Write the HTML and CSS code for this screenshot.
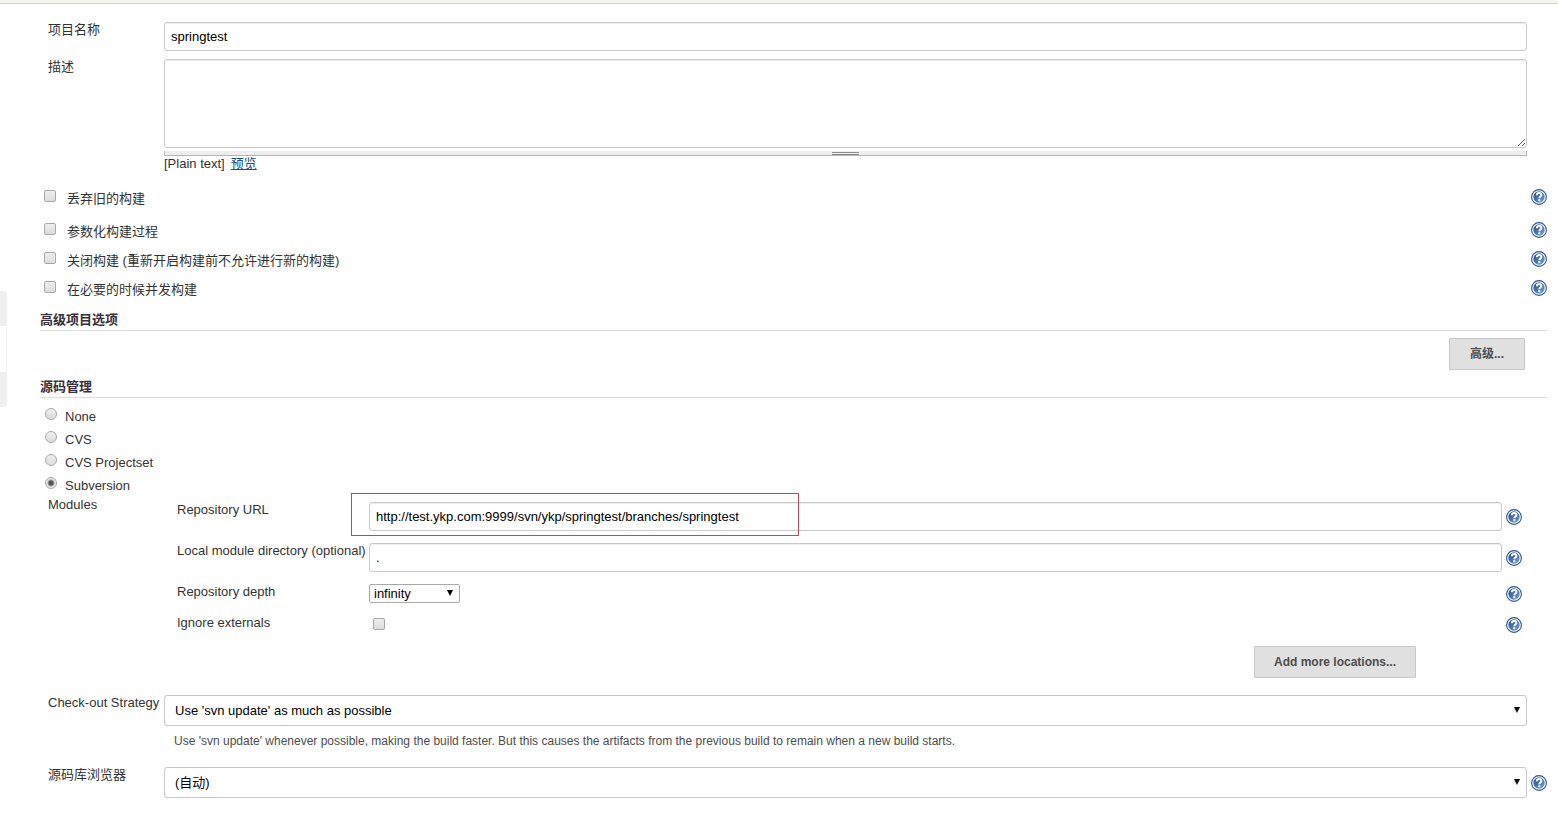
FILE: index.html
```html
<!DOCTYPE html>
<html lang="zh-CN">
<head>
<meta charset="utf-8">
<title>springtest Config</title>
<link rel="stylesheet" href="styles.css">
</head>
<body>
<svg class="defs" aria-hidden="true">
  <defs>
    <linearGradient id="ball" x1="0" y1="0" x2="1" y2="1">
      <stop offset="0" stop-color="#1f4a87"/>
      <stop offset="1" stop-color="#7aa3d4"/>
    </linearGradient>
    <symbol id="help" viewBox="0 0 16 16">
      <circle cx="8" cy="8" r="7.4" fill="#fff" stroke="#2c5591" stroke-width="1.1"/>
      <circle cx="8" cy="8" r="5.7" fill="url(#ball)"/>
      <path d="M5.800 6.200C5.900 4.700 6.800 4 8.100 4c1.400 0 2.300.8 2.300 2 0 1.500-2.100 1.600-2.100 3.200" fill="none" stroke="#fff" stroke-width="1.900"/>
      <rect x="7.300" y="10.200" width="2" height="2" fill="#fff"/>
    </symbol>
  </defs>
</svg>
<div class="topbar"></div>
<div class="page">
  <aside class="drawer"><div class="drawer-body"></div></aside>
  <form class="config">
    <div class="row">
      <label class="name" for="project">项目名称</label>
      <input class="text" id="project" type="text" value="springtest">
    </div>
    <div class="row">
      <label class="name" for="desc">描述</label>
      <div class="stack">
        <textarea class="text area" id="desc"></textarea>
        <div class="handle"><span class="grip"></span></div>
        <div class="preview"><span>[Plain text]</span><a href="#preview">预览</a></div>
      </div>
    </div>

    <div class="checks">
      <div class="option first"><input class="check" type="checkbox" id="c1"><label for="c1">丢弃旧的构建</label><button class="help" type="button" aria-label="Help"><svg><use href="#help"/></svg></button></div>
      <div class="option"><input class="check" type="checkbox" id="c2"><label for="c2">参数化构建过程</label><button class="help" type="button" aria-label="Help"><svg><use href="#help"/></svg></button></div>
      <div class="option"><input class="check" type="checkbox" id="c3"><label for="c3">关闭构建 (重新开启构建前不允许进行新的构建)</label><button class="help" type="button" aria-label="Help"><svg><use href="#help"/></svg></button></div>
      <div class="option"><input class="check" type="checkbox" id="c4"><label for="c4">在必要的时候并发构建</label><button class="help" type="button" aria-label="Help"><svg><use href="#help"/></svg></button></div>
    </div>

    <h2 class="section">高级项目选项</h2>
    <div class="actions"><button class="btn" type="button">高级...</button></div>

    <h2 class="section">源码管理</h2>
    <div class="radios">
      <div class="scm"><input class="radio" type="radio" name="scm" id="r1"><label for="r1">None</label></div>
      <div class="scm"><input class="radio" type="radio" name="scm" id="r2"><label for="r2">CVS</label></div>
      <div class="scm"><input class="radio" type="radio" name="scm" id="r3"><label for="r3">CVS Projectset</label></div>
      <div class="scm"><input class="radio" type="radio" name="scm" id="r4" checked><label for="r4">Subversion</label></div>
    </div>

    <div class="modules">
      <div class="name">Modules</div>
      <div class="fields">
        <div class="field">
          <label for="url">Repository URL</label>
          <div class="marked"><input class="text" id="url" type="text" value="http://test.ykp.com:9999/svn/ykp/springtest/branches/springtest"><span class="mark"></span></div>
          <button class="help" type="button" aria-label="Help"><svg><use href="#help"/></svg></button>
        </div>
        <div class="field">
          <label for="local">Local module directory (optional)</label>
          <input class="text" id="local" type="text" value=".">
          <button class="help" type="button" aria-label="Help"><svg><use href="#help"/></svg></button>
        </div>
        <div class="field">
          <label for="depth">Repository depth</label>
          <div class="select small"><select id="depth"><option>infinity</option></select></div>
          <button class="help" type="button" aria-label="Help"><svg><use href="#help"/></svg></button>
        </div>
        <div class="field">
          <label for="ext">Ignore externals</label>
          <input class="check inner" type="checkbox" id="ext">
          <button class="help" type="button" aria-label="Help"><svg><use href="#help"/></svg></button>
        </div>
        <div class="more"><button class="btn" type="button">Add more locations...</button></div>
      </div>
    </div>

    <div class="row strategy">
      <label class="name" for="strategy">Check-out Strategy</label>
      <div class="stack">
        <div class="select"><select id="strategy"><option>Use 'svn update' as much as possible</option></select></div>
        <p class="hint">Use 'svn update' whenever possible, making the build faster. But this causes the artifacts from the previous build to remain when a new build starts.</p>
      </div>
    </div>
    <div class="row">
      <label class="name" for="browser">源码库浏览器</label>
      <div class="select"><select id="browser"><option>(自动)</option></select></div>
      <button class="help" type="button" aria-label="Help"><svg><use href="#help"/></svg></button>
    </div>
  </form>
</div>
</body>
</html>
```
FILE: styles.css
```css
* {
  box-sizing: border-box;
}

body {
  margin: 0;
  background: #fff;
  color: #333;
  font: 13px/15px "Liberation Sans", "Noto Sans CJK SC", sans-serif;
}

input, select, textarea, button {
  margin: 0;
  font: inherit;
}

.defs {
  position: absolute;
  width: 0;
  height: 0;
}

.topbar {
  height: 4px;
  background: #f6f6ef;
  border-bottom: 1px solid #d3d3c8;
}

.page {
  display: flex;
}

/* Edge of the collapsed side drawer */
.drawer {
  flex: none;
  width: 7px;
  height: 116px;
  margin-top: 287px;
  padding: 35px 0;
  background: #efefef;
  border-radius: 0 4px 4px 0;
}

.drawer-body {
  height: 46px;
  background: #fff;
  border-right: 1px solid #efefef;
}

.config {
  flex: 1;
  min-width: 0;
  padding: 18px 11px 19px 33px;
}

.row {
  display: grid;
  grid-template-columns: 124px 1fr 20px;
  margin-bottom: 8px;
}

.name {
  padding-left: 8px;
  white-space: nowrap;
}

.text {
  display: block;
  width: 100%;
  height: 29px;
  padding: 0 6px;
  background: #fff;
  border: 1px solid #c9c9c9;
  border-radius: 3px;
  box-shadow: inset 0 1px 1px #eee;
  color: #000;
}

.area {
  height: 89px;
  resize: vertical;
}

.handle {
  display: flex;
  justify-content: center;
  height: 5px;
  margin-top: 3px;
  background: #eee;
  border: 1px solid #b5b5b5;
  border-top: 0;
}

.grip {
  width: 27px;
  height: 3px;
  margin-top: 1px;
  border: 1px solid #888;
  border-width: 1px 0;
}

.preview {
  display: flex;
  gap: 6px;
}

a {
  color: #204a87;
}

.checks {
  margin: 11px 0 1px;
}

.option {
  display: flex;
  align-items: center;
  height: 29px;
  padding-left: 4px;
}

.option.first {
  margin-bottom: 4px;
}

.option label {
  flex: 1;
  padding: 4px 0 0 11px;
}

.check, .radio {
  appearance: none;
  flex: none;
  width: 12px;
  height: 12px;
  border: 1px solid #a9a9a9;
  border-radius: 2px;
  background: linear-gradient(#eee, #dcdcdc);
}

.option .check {
  margin-bottom: 1px;
}

.radio {
  border-radius: 50%;
  margin-bottom: 3px;
}

.radio:checked {
  background: radial-gradient(circle, #555 0 2px, #e8e8e8 4px);
}

.help {
  display: block;
  flex: none;
  align-self: center;
  justify-self: end;
  width: 16px;
  height: 16px;
  padding: 0;
  border: 0;
  background: none;
}

.help svg {
  display: block;
  width: 16px;
  height: 16px;
}

.section {
  margin: 0;
  padding: 9px 0 3px;
  border-bottom: 1px solid #ddd;
  color: #382f3c;
  font-size: 13px;
  font-weight: bold;
  line-height: 15px;
}

.actions {
  display: flex;
  justify-content: flex-end;
  padding: 7px 22px 0 0;
}

.btn {
  height: 32px;
  padding: 0 19px;
  background: #e0e0e0;
  border: 1px solid #c8c8c8;
  border-radius: 1px;
  color: #4d4d4d;
  font-size: 12px;
  font-weight: bold;
}

.actions .btn {
  padding: 0 20px;
}

.radios {
  padding-top: 6px;
}

.scm {
  display: flex;
  align-items: center;
  height: 23px;
  padding-left: 5px;
}

.scm label {
  padding: 2px 0 0 8px;
}

.modules {
  display: grid;
  grid-template-columns: 124px 1fr;
  padding: 1px 25px 0 0;
}

.fields {
  display: grid;
  row-gap: 12px;
  padding: 5px 0 0 13px;
}

.field {
  display: grid;
  grid-template-columns: 192px 1fr 20px;
  min-height: 19px;
}

.field label {
  white-space: nowrap;
}

.marked {
  position: relative;
}

/* Highlight laid over the start of the URL box */
.mark {
  position: absolute;
  left: -18px;
  top: -9px;
  width: 448px;
  height: 43px;
  border: 1px solid #c0474f;
  pointer-events: none;
}

.check.inner {
  margin: 3px 0 0 4px;
}

.more {
  display: flex;
  justify-content: flex-end;
  padding-right: 106px;
}

.select {
  position: relative;
  height: 31px;
}

.select select {
  display: block;
  appearance: none;
  width: 100%;
  height: 100%;
  padding: 0 10px;
  background: #fff;
  border: 1px solid #c9c9c9;
  border-radius: 3px;
  color: #000;
}

.select::after {
  content: "";
  position: absolute;
  right: 7px;
  top: 12px;
  border: 3px solid transparent;
  border-top: 6px solid #000;
  border-bottom: 0;
  pointer-events: none;
}

.select.small {
  width: 91px;
  height: 19px;
}

.small select {
  padding: 0 4px;
  border-color: #a9a9a9;
  border-radius: 2px;
}

.select.small::after {
  top: 6px;
}

.strategy {
  margin: 17px 0 18px;
}

.hint {
  margin: 8px 0 0 10px;
  color: #4d4d4d;
  font-size: 12px;
  line-height: 15px;
}
```
